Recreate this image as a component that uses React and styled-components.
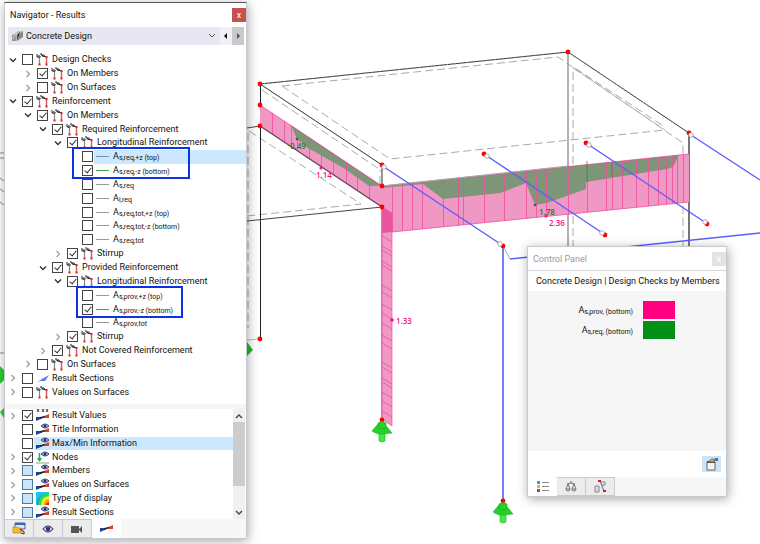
import React from "react";
import styled, { createGlobalStyle } from "styled-components";

const results = [
  { level: 0, text: "Design Checks", open: true },
  { level: 1, text: "On Members", open: false, checked: true },
  { level: 1, text: "On Surfaces", open: false },
  { level: 0, text: "Reinforcement", open: true, checked: true },
  { level: 1, text: "On Members", open: true, checked: true },
  { level: 2, text: "Required Reinforcement", open: true, checked: true },
  { level: 3, text: "Longitudinal Reinforcement", open: true, checked: true },
  { level: 4, sub: "s,req,+z (top)", line: "#6f93ad", selected: true },
  { level: 4, sub: "s,req,-z (bottom)", line: "#3da545", checked: true },
  { level: 4, sub: "s,req", line: "#999" },
  { level: 4, sub: "l,req", line: "#999" },
  { level: 4, sub: "s,req,tot,+z (top)", line: "#999" },
  { level: 4, sub: "s,req,tot,-z (bottom)", line: "#999" },
  { level: 4, sub: "s,req,tot", line: "#999" },
  { level: 3, text: "Stirrup", open: false, checked: true },
  { level: 2, text: "Provided Reinforcement", open: true, checked: true },
  { level: 3, text: "Longitudinal Reinforcement", open: true, checked: true },
  { level: 4, sub: "s,prov,+z (top)", line: "#999" },
  { level: 4, sub: "s,prov,-z (bottom)", line: "#f03c9b", checked: true },
  { level: 4, sub: "s,prov,tot", line: "#999" },
  { level: 3, text: "Stirrup", open: false, checked: true },
  { level: 2, text: "Not Covered Reinforcement", open: false, checked: true },
  { level: 1, text: "On Surfaces", open: false },
  { level: 0, text: "Result Sections", open: false, icon: "section" },
  { level: 0, text: "Values on Surfaces", open: false },
];

const display = [
  { level: 0, text: "Result Values", open: false, checked: true, icon: "values" },
  { level: 0, text: "Title Information", icon: "member" },
  { level: 0, text: "Max/Min Information", icon: "member", selected: true },
  { level: 0, text: "Nodes", open: false, checked: true, icon: "node" },
  { level: 0, text: "Members", open: false, partial: true, icon: "member" },
  { level: 0, text: "Values on Surfaces", open: false, partial: true, icon: "member" },
  { level: 0, text: "Type of display", open: false, partial: true, icon: "rainbow" },
  { level: 0, text: "Result Sections", open: false, partial: true, icon: "member" },
];

const Wedge = () => (
  <>
    <path d="M0 12 V8 L7 8 V9 Z" fill="#1d3f9c" />
    <path d="M6 8 L13 5 V9 L6 9 Z" fill="#d8402f" />
    <path d="M4 8 L9 7 V8 L4 10 Z" fill="#222" />
  </>
);

const Eye = () => (
  <>
    <path d="M5 3 Q9 -1 13 3 Q9 7 5 3 Z" fill="#b9c2e6" stroke="#27346f" strokeWidth="0.9" />
    <circle cx="9" cy="3" r="1.5" fill="#27346f" />
  </>
);

const TreeIcon = ({ kind = "frame" }) => (
  <svg width="13" height="13" viewBox="0 0 13 13" aria-hidden="true">
    {kind === "frame" && (
      <>
        <path d="M3.5 12 V5 M10.5 12 V4" stroke="#888" strokeWidth="1.2" />
        <path d="M3 4.5 L5 3.5 M7 3.5 H11" stroke="#555" />
        <path d="M1 1 V4 H3 M3 2 V5" stroke="#222" fill="none" />
        <path d="M5 0 V2 L7 2.5 M7 1 V4 M8 2 L9 4" stroke="#222" fill="none" />
        <path d="M10.5 4 V11" stroke="#d86060" strokeWidth="1.3" />
        <path d="M2.5 10.5 H4.5 V12.5 H2.5 Z M9.5 10.5 H11.5 V12.5 H9.5 Z" fill="#d22" />
        <path d="M9.5 3 H11.5 V5 H9.5 Z" fill="#d22" />
      </>
    )}
    {kind === "section" && <path d="M0 11 L6 7 L13 3 L9 9 L4 9 Z" fill="#5b76ee" />}
    {kind === "member" && (
      <>
        <Wedge />
        <Eye />
      </>
    )}
    {kind === "values" && (
      <>
        <path
          d="M1 0 L3 3 M3 0 L1 3 M6 0 L8 3 M8 0 L6 3 M10 0 L12 3 M12 0 L10 3"
          stroke="#222"
          strokeWidth="0.8"
        />
        <Wedge />
      </>
    )}
    {kind === "node" && (
      <>
        <path d="M3.5 2 V9" stroke="#17b24a" strokeWidth="1.6" />
        <path d="M1 7 H6 L3.5 11 Z" fill="#17b24a" />
        <path d="M0 12 H13" stroke="#999" />
        <Eye />
      </>
    )}
    {kind === "rainbow" && (
      <>
        <path d="M0 0 H13 V13 H0 Z" fill="#1673f0" />
        <path d="M0 0 H13 V2 Q1 2 1 13 H0 Z" fill="#17c7ef" />
        <path d="M13 1 Q2 2 2 13 H13 Z" fill="#25dd55" />
        <path d="M13 4 Q5 5 5 13 H13 Z" fill="#f2ee22" />
        <path d="M13 7 Q8 8 8 13 H13 Z" fill="#f79413" />
        <path d="M13 10 Q10 11 10 13 H13 Z" fill="#e32217" />
      </>
    )}
  </svg>
);

const Chevron = ({ open }) => (
  <svg width="8" height="8" viewBox="0 0 8 8" fill="none" aria-hidden="true">
    {open ? (
      <path d="M1 2.5 L4 5.5 L7 2.5" stroke="#333" strokeWidth="1.4" />
    ) : (
      <path d="M2.5 1 L5.5 4 L2.5 7" stroke="#999" strokeWidth="1.1" />
    )}
  </svg>
);

const Tree = ({ items, name }) => (
  <>
    {items.map((item, i) => {
      const id = `${name}-${i}`;
      return (
        <Row key={id} $level={item.level}>
          {item.open === undefined ? (
            <Spacer />
          ) : (
            <Expander type="button" aria-expanded={item.open} aria-label="Toggle">
              <Chevron open={item.open} />
            </Expander>
          )}
          <Checkbox
            type="checkbox"
            id={id}
            defaultChecked={item.checked}
            $partial={item.partial}
          />
          <RowLabel htmlFor={id} $selected={item.selected}>
            {item.line ? <LegendLine $color={item.line} /> : <TreeIcon kind={item.icon} />}
            {item.sub ? (
              <span>
                A<Sub>{item.sub}</Sub>
              </span>
            ) : (
              <span>{item.text}</span>
            )}
          </RowLabel>
        </Row>
      );
    })}
  </>
);

const leftHatch = [272, 284, 291, 297, 309, 321, 333, 346, 357, 369];
const beamHatch = [
  392, 402, 412, 422, 443, 458, 463, 484, 504, 526, 536, 546, 568, 587, 606, 612, 622, 636, 648,
  658, 666, 672, 677, 683,
];
const columnHatch = [
  212, 219, 236, 246, 250, 261, 265, 285, 292, 304, 313, 323, 335, 343, 362, 367, 378, 382, 392,
  401, 411,
];
const redNodes = [
  [260, 84], [260, 105], [260, 126], [568, 52], [382, 165], [382, 186], [382, 207],
  [689, 133], [484, 154], [586, 143], [605, 235], [707, 224], [503, 246], [260, 339],
  [382, 420], [503, 501],
];
const hinges = [[384, 167], [487, 156], [589, 145], [691, 135], [602, 233], [705, 222], [500, 244]];

const Support = ({ x, y }) => (
  <g transform={`translate(${x} ${y})`} fill="#26cf2b" stroke="#15b51c" strokeWidth="0.6">
    <path d="M-3 11 H3 V20 Q0 22 -3 20 Z" fill="#45ea45" />
    <path d="M-4 3 L-10 10 Q-3 14 0 13 L10 12 Q7 8 4 5 Z" />
    <path d="M-4 2 Q0 -1 4 2 L4 7 Q0 9 -4 7 Z" fill="#20d326" />
  </g>
);

const Scene = () => (
  <SceneSvg viewBox="0 0 760 544" preserveAspectRatio="xMinYMin slice" fill="none">
    <g stroke="#aaa" strokeDasharray="8 4">
      <path d="M282 86 L558 57 L683 143 V248" />
      <path d="M282 86 L390 159 L665 130" />
      <path d="M262 90 L382 171 M262 122 L380 199 V170" />
      <path d="M573 248 V68 L665 130 M575 68 L665 127" />
      <path d="M249 131 L361 204 L247 216" />
      <path d="M248 133 V328" />
    </g>
    <path d="M568 52 V248" stroke="#999" strokeWidth="1.5" />
    <path d="M689 133 V248" stroke="#777" strokeWidth="2" />
    <path d="M247 128 L260 126 M247 221 L382 207" stroke="#444" />
    <path d="M260 84 L568 52 L689 133" stroke="#333" />
    <path d="M260 84 L568 52 L689 133" stroke="#999" strokeDasharray="1 3" />
    <path d="M260 84 L382 165 V207" stroke="#333" />
    <path d="M260.5 84 V339" stroke="#222" />
    <path d="M246 340 L260 339" stroke="#7be47b" />

    <path d="M260 105 L382 186 V207 L260 126 Z" fill="#f098c4" />
    <path
      d="M291 125 L297 139 L308 148 L345 169 L369 186 L424 184 L424 183 L382 186 Z"
      fill="#7d9678"
    />
    <path d="M382 187 L689 154 V202 L382 233 Z" fill="#f098c4" />
    <path
      d="M382 186 L679 155 L673 167 L667 169 L586 182 V189 L547 203 L535 205 L526 183 L508 190 L500 193 L443 199 L423 184 L382 188 Z"
      fill="#7d9678"
    />
    <path d="M382 207 L392 213 V426 L382 419 Z" fill="#f098c4" stroke="#f04c9f" strokeWidth="0.7" />
    <path d="M382 207 L392 213 V232 L382 233 Z" fill="#e8559f" />
    <g stroke="#f04c9f" strokeWidth="0.8">
      {leftHatch.map((x) => (
        <path key={x} d={`M${x}.5 ${105 + (x - 260) * 0.664} v21`} />
      ))}
      {beamHatch.map((x) => (
        <path
          key={x}
          d={`M${x}.5 ${187 - (x - 382) * 0.107} V${233 - (x - 382) * 0.101}`}
        />
      ))}
      {columnHatch.map((y) => (
        <path key={y} d={`M382 ${y} l10 6`} />
      ))}
      <path d="M260 105 L382 186 L689 154" />
      <path d="M392 232 L689 202" />
    </g>
    <path d="M587 161 V182 M612 162 V177" stroke="#289234" strokeWidth="0.8" />
    <path d="M260 126 L382 207" stroke="#6b4058" strokeWidth="1.3" />
    <path d="M381.5 207 V419" stroke="#a8999f" strokeWidth="1.2" />
    <path d="M382 186 L568 166" stroke="#aaa" />

    <g stroke="#5c5cff" strokeWidth="1.4">
      <path d="M384 167 L502 245 M487 156 L604 234 M589 145 L706 223 M691 135 L760 180" />
      <path d="M510 259 L760 233" />
    </g>
    <path d="M503 246 V500" stroke="#7a7aff" strokeWidth="2" />
    <path d="M503 246 L510 259" stroke="#aaa" />

    <g fill="#f00">
      {redNodes.map(([x, y]) => (
        <circle key={`${x}-${y}`} cx={x} cy={y} r="2.4" />
      ))}
    </g>
    <g fill="#fff" stroke="#999" strokeWidth="0.8">
      {hinges.map(([x, y]) => (
        <circle key={`${x}-${y}`} cx={x} cy={y} r="2.3" />
      ))}
    </g>
    <Support x={382} y={421} />
    <Support x={503} y={502} />
    <path d="M247 342 L253 350 L247 356 Z" fill="#1fbf25" />
    <path d="M0 366 L4 370 V380 L0 384 Z M0 402 L4 408 M0 412 L4 418 V408 Z" fill="#26cf2b" />
    <path d="M0 153 H4 M0 158 H4 M0 178 L4 181 M0 189 L4 192 M0 202 L4 205 M0 353 H4" stroke="#888" />

    <circle cx="297" cy="139" r="1.3" fill="#167a20" />
    <circle cx="535" cy="205" r="1.3" fill="#167a20" />
    <circle cx="546" cy="216" r="1.6" fill="#f5148a" />
    <circle cx="321" cy="168" r="1.6" fill="#f5148a" />
    <circle cx="392" cy="320" r="1.8" fill="#f5148a" />
    <SceneText x="290" y="149" fill="#1d7d27">0.49</SceneText>
    <SceneText x="316" y="178" fill="#f5148a">1.14</SceneText>
    <SceneText x="539" y="215" fill="#1d7d27">1.78</SceneText>
    <SceneText x="549" y="226" fill="#f5148a">2.36</SceneText>
    <SceneText x="396" y="324" fill="#f5148a">1.33</SceneText>
  </SceneSvg>
);

const Navigator = () => (
  <NavWindow>
    <TitleBar>
      <h1>Navigator - Results</h1>
      <CloseButton type="button" aria-label="Close">
        x
      </CloseButton>
    </TitleBar>
    <ModuleBar>
      <svg width="12" height="12" viewBox="0 0 12 12" aria-hidden="true">
        <path d="M0 5 L6 1 L11 1 L5 5 Z" fill="#bbb" />
        <path d="M0 5 H5 V11 H0 Z" fill="#999" />
        <path d="M5 5 L11 1 V7 L5 11 Z" fill="#888" />
        <path d="M5 1 L1 9 M8 1 L5 5 V11" stroke="#ddd" strokeWidth="0.7" />
      </svg>
      <ModuleSelect aria-label="Design module" defaultValue="concrete">
        <option value="concrete">Concrete Design</option>
      </ModuleSelect>
      <svg width="8" height="8" viewBox="0 0 8 8" fill="none" aria-hidden="true">
        <path d="M1 2 L4 5 L7 2" stroke="#555" />
      </svg>
      <ArrowButton type="button" aria-label="Previous">
        <svg width="6" height="6" viewBox="0 0 6 6">
          <path d="M4 0 V6 L1 3 Z" fill="#111" />
        </svg>
      </ArrowButton>
      <ArrowButton type="button" aria-label="Next" $shaded>
        <svg width="6" height="6" viewBox="0 0 6 6">
          <path d="M2 0 V6 L5 3 Z" fill="#555" />
        </svg>
      </ArrowButton>
    </ModuleBar>
    <ResultsPane>
      <TreeList>
        <Tree items={results} name="result" />
      </TreeList>
      <Marker $top={95} $left={67} $width={118} />
      <Marker $top={234} $left={71} $width={107} />
    </ResultsPane>
    <DisplayPane>
      <DisplayList>
        <Tree items={display} name="display" />
      </DisplayList>
      <ScrollBar>
        <ScrollButton type="button" aria-label="Scroll up">
          <svg width="8" height="8" viewBox="0 0 8 8" fill="none">
            <path d="M1 6 L4 3 L7 6" stroke="#444" strokeWidth="1.4" />
          </svg>
        </ScrollButton>
        <Thumb />
        <ScrollButton type="button" aria-label="Scroll down">
          <svg width="8" height="8" viewBox="0 0 8 8" fill="none">
            <path d="M1 2 L4 5 L7 2" stroke="#444" strokeWidth="1.4" />
          </svg>
        </ScrollButton>
      </ScrollBar>
    </DisplayPane>
    <TabBar>
      <Tab type="button" aria-label="Data">
        <svg width="14" height="13" viewBox="0 0 14 13" fill="none">
          <path d="M3 1 H13 V7 H3 Z" fill="#dbe6fb" stroke="#3c62b5" />
          <path d="M3 2 H13" stroke="#3c62b5" strokeWidth="2" />
          <path d="M1 5 H5 L6 6 H9 V11 H1 Z" fill="#f5bd35" stroke="#b98212" strokeWidth="0.7" />
          <path d="M8 7 L12 10 V12 M12 12 L9 11" stroke="#a52a2a" strokeWidth="1.3" />
        </svg>
      </Tab>
      <Tab type="button" aria-label="Display">
        <svg width="12" height="12" viewBox="0 0 12 12" fill="none">
          <path d="M1 6 Q6 0 11 6 Q6 12 1 6 Z" fill="#eef" stroke="#27346f" strokeWidth="1.1" />
          <circle cx="6" cy="6" r="2.3" fill="#27346f" />
        </svg>
      </Tab>
      <Tab type="button" aria-label="Views">
        <svg width="12" height="12" viewBox="0 0 12 12" fill="#555">
          <path d="M0 3 H8 V10 H0 Z M8 6 L11 3 V10 L8 7 Z" />
        </svg>
      </Tab>
      <Tab type="button" aria-label="Results" $active>
        <svg width="14" height="13" viewBox="0 2 14 13">
          <Wedge />
        </svg>
      </Tab>
    </TabBar>
  </NavWindow>
);

const ControlPanel = () => (
  <PanelWindow>
    <TitleBar $muted>
      <h2>Control Panel</h2>
      <CloseButton type="button" aria-label="Close" $muted>
        x
      </CloseButton>
    </TitleBar>
    <PanelHeading>Concrete Design | Design Checks by Members</PanelHeading>
    <Legend>
      <LegendName>
        A<Sub>s,prov, (bottom)</Sub>
      </LegendName>
      <Swatch $color="#ff0080" />
      <LegendName>
        A<Sub>s,req, (bottom)</Sub>
      </LegendName>
      <Swatch $color="#008f17" />
    </Legend>
    <PanelTools>
      <ToolButton type="button" aria-label="Panel settings">
        <svg width="14" height="14" viewBox="0 0 14 14" fill="none">
          <path d="M2 5 H10 V13 H2 Z" fill="#f5f5f5" stroke="#666" />
          <path d="M2 5 H10" stroke="#555" strokeWidth="2" />
          <path d="M4 4 Q6 1 10 2 L9 5 L5 5 Z" fill="#c69a6d" stroke="#7a5a3a" strokeWidth="0.6" />
          <path d="M10 1 L13 1 V4 L10 4 Z" fill="#3d78c2" />
        </svg>
      </ToolButton>
    </PanelTools>
    <TabBar>
      <Tab type="button" aria-label="Legend" $active>
        <svg width="12" height="12" viewBox="0 0 12 12" fill="none">
          <path d="M0 0 H3 V3 H0 Z" fill="#4d8df6" />
          <path d="M0 4 H3 V7 H0 Z" fill="#f2b705" />
          <path d="M0 8 H3 V11 H0 Z" fill="#a84848" />
          <path d="M5 1.5 H12 M5 5.5 H12 M5 9.5 H12" stroke="#888" />
        </svg>
      </Tab>
      <Tab type="button" aria-label="Scaling">
        <svg width="12" height="12" viewBox="0 0 12 12" fill="none" stroke="#666" strokeWidth="0.9">
          <path d="M6 0 V2 M2 3 Q6 1 10 3 M3 3 L1 8 H5 Z M9 3 L7 8 H11 Z" />
          <path d="M1 8 Q1 10 3 10 Q5 10 5 8 M7 8 Q7 10 9 10 Q11 10 11 8" />
        </svg>
      </Tab>
      <Tab type="button" aria-label="Filter">
        <svg width="12" height="13" viewBox="0 0 12 13" fill="none">
          <path d="M1 6 H5 V12 H1 Z" fill="#ddd" stroke="#888" />
          <path d="M6 1 L10 11" stroke="#5b8fc4" strokeWidth="1.2" />
          <path d="M7 2 H11 V5 L8 5" stroke="#777" strokeWidth="0.9" />
          <path d="M4 0 H7 V2 H4 Z M9 10 H12 V12 H9 Z" fill="#d91a1a" />
        </svg>
      </Tab>
    </TabBar>
  </PanelWindow>
);

const App = () => {
  return (
    <Workspace>
      <GlobalStyle />
      <Scene />
      <Navigator />
      <ControlPanel />
    </Workspace>
  );
};

export default App;

const GlobalStyle = createGlobalStyle`
  * {
    box-sizing: border-box;
  }
  body {
    margin: 0;
    background: #fff;
    color: #111;
    font: 9px Roboto, "Open Sans", sans-serif;
  }
  button, select {
    font: inherit;
    color: inherit;
    border: none;
    padding: 0;
  }
`;

const Workspace = styled.main`
  position: relative;
  height: 100vh;
  overflow: hidden;
`;

const SceneSvg = styled.svg`
  position: absolute;
  inset: 0;
  width: 100%;
  height: 100%;
`;

const SceneText = styled.text`
  font-family: "Open Sans", sans-serif;
  font-size: 8px;
  font-weight: 600;
`;

const Window = styled.section`
  position: absolute;
  display: flex;
  flex-direction: column;
  background: #fff;
  border: 1px solid #c9c9d6;
  box-shadow: 1px 2px 10px rgba(0, 0, 0, 0.35);
`;

const NavWindow = styled(Window)`
  top: 2px;
  bottom: 5px;
  left: 4px;
  width: 243px;
  border-top-color: #555;
`;

const PanelWindow = styled(Window)`
  top: 246px;
  right: 33px;
  width: 200px;
  height: 251px;
`;

const TitleBar = styled.header`
  display: flex;
  align-items: center;
  justify-content: space-between;
  height: 24px;
  padding-left: 5px;
  border-bottom: ${(props) => (props.$muted ? "1px solid #d5d5de" : "none")};
  color: ${(props) => (props.$muted ? "#999" : "inherit")};

  h1,
  h2 {
    margin: 0;
    font-size: 9px;
    font-weight: 400;
  }
`;

const CloseButton = styled.button`
  width: 14px;
  height: 14px;
  line-height: 12px;
  background: ${(props) => (props.$muted ? "#e3e3e3" : "#c75050")};
  color: #fff;
`;

const ModuleBar = styled.div`
  display: flex;
  align-items: center;
  height: 18px;
  margin: 0 2px 7px 3px;
  padding-left: 4px;
  background: #e6e7f3;
`;

const ModuleSelect = styled.select`
  flex: 1;
  appearance: none;
  margin-left: 2px;
  background: transparent;
`;

const ArrowButton = styled.button`
  display: grid;
  place-items: center;
  width: 12px;
  height: 18px;
  margin-left: ${(props) => (props.$shaded ? "0" : "4px")};
  background: ${(props) => (props.$shaded ? "#c9c9c9" : "#f0f0f6")};
`;

const ResultsPane = styled.div`
  position: relative;
  flex: 1;
  min-height: 0;
  padding: 1px 0 5px;
`;

const TreeList = styled.ul`
  display: grid;
  grid-auto-rows: 1fr;
  height: 100%;
  margin: 0;
  padding: 0;
  list-style: none;
`;

const Row = styled.li`
  display: flex;
  align-items: center;
  min-height: 0;
  padding-left: ${(props) => props.$level * 15 + 4}px;
`;

const Expander = styled.button`
  display: grid;
  place-items: center;
  width: 8px;
  height: 8px;
  margin-right: 5px;
  background: none;
`;

const Spacer = styled.span`
  width: 13px;
`;

const Checkbox = styled.input`
  appearance: none;
  display: grid;
  place-items: center;
  flex: none;
  width: 11px;
  height: 11px;
  margin: 0 1px 0 0;
  border: 1px solid ${(props) => (props.$partial ? "#4a7ba6" : "#444")};
  background: ${(props) => (props.$partial ? "#cce4f7" : "#fff")};

  &:checked::after {
    content: "";
    width: 3px;
    height: 6px;
    margin-bottom: 2px;
    border: solid #333;
    border-width: 0 1px 1px 0;
    transform: rotate(40deg);
  }
`;

const RowLabel = styled.label`
  display: flex;
  align-items: center;
  flex: 1;
  gap: 3px;
  height: 100%;
  padding-left: 2px;
  line-height: 13px;
  white-space: nowrap;
  background: ${(props) => (props.$selected ? "#cce8ff" : "transparent")};
`;

const LegendLine = styled.span`
  width: 13px;
  height: 1px;
  margin-right: 1px;
  background: ${(props) => props.$color};
`;

const Sub = styled.sub`
  font-size: 7px;
  line-height: 0;
  vertical-align: -1px;
`;

const Marker = styled.div`
  position: absolute;
  top: ${(props) => props.$top}px;
  left: ${(props) => props.$left}px;
  width: ${(props) => props.$width}px;
  height: 32px;
  border: 2px solid #0a32e6;
  pointer-events: none;
`;

const DisplayPane = styled.div`
  display: flex;
  height: 115px;
  border-top: 5px solid #f5f5f5;
`;

const DisplayList = styled(TreeList)`
  flex: 1;
`;

const ScrollBar = styled.div`
  display: flex;
  flex-direction: column;
  width: 12px;
  margin-right: 1px;
  background: #f0f0f0;
`;

const ScrollButton = styled.button`
  display: grid;
  place-items: center;
  height: 13px;
  background: none;
`;

const Thumb = styled.div`
  height: 64px;
  margin-bottom: auto;
  background: #cdcdcd;
`;

const TabBar = styled.nav`
  display: flex;
  height: 19px;
  background: #f7f7f7;
`;

const Tab = styled.button`
  display: grid;
  place-items: center;
  width: 29px;
  border: solid #c9c9d6;
  border-width: ${(props) => (props.$active ? "0" : "1px 1px 1px 0")};
  background: ${(props) => (props.$active ? "#fff" : "#ececec")};
`;

const PanelHeading = styled.h3`
  margin: 0;
  padding: 0 8px;
  font-size: 9px;
  font-weight: 400;
  line-height: 20px;
  white-space: nowrap;
`;

const Legend = styled.div`
  display: grid;
  grid-template-columns: 105px 32px;
  grid-auto-rows: 18px;
  gap: 2px 10px;
  flex: 1;
  padding-top: 10px;
  background: #f6f6f6;
`;

const LegendName = styled.span`
  align-self: center;
  text-align: right;
`;

const Swatch = styled.span`
  background: ${(props) => props.$color};
`;

const PanelTools = styled.div`
  display: flex;
  align-items: center;
  justify-content: flex-end;
  height: 26px;
  padding-right: 5px;
`;

const ToolButton = styled.button`
  display: grid;
  place-items: center;
  width: 19px;
  height: 16px;
  background: #cce4f7;
`;
